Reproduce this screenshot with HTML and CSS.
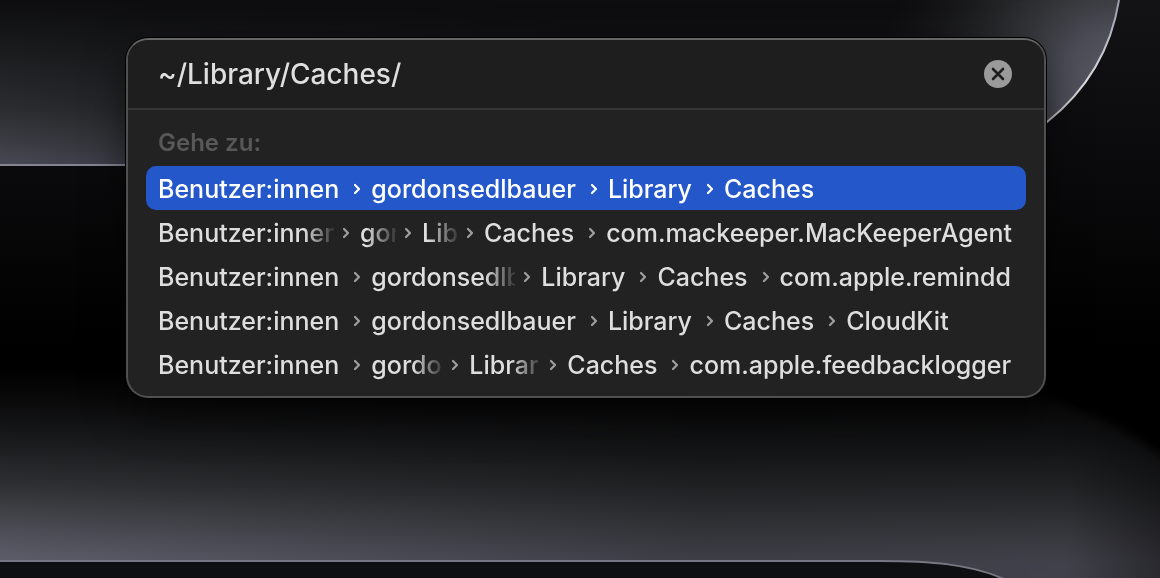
FILE: index.html
```
<!DOCTYPE html>
<html lang="de">
<head>
  <meta charset="UTF-8">
  <meta name="viewport" content="width=device-width, initial-scale=1.0">
  <title>Gehe zu</title>
  <link rel="stylesheet" href="styles.css">
</head>
<body>
  <!-- Desktop wallpaper -->
  <svg class="wallpaper" viewBox="0 0 1160 578" preserveAspectRatio="none" aria-hidden="true">
    <defs>
      <linearGradient id="upper" x1="0" y1="0" x2="0" y2="1">
        <stop offset="0" stop-color="#0d0d0f"/>
        <stop offset="0.3" stop-color="#1a1b1d"/>
        <stop offset="0.65" stop-color="#2b2c2f"/>
        <stop offset="0.9" stop-color="#3f4048"/>
        <stop offset="1" stop-color="#484957"/>
      </linearGradient>
      <linearGradient id="upperShade" x1="0" y1="0" x2="1" y2="0">
        <stop offset="0" stop-color="#0c0c0e" stop-opacity="0"/>
        <stop offset="0.15" stop-color="#0c0c0e" stop-opacity="0.3"/>
        <stop offset="0.5" stop-color="#0c0c0e" stop-opacity="0.7"/>
        <stop offset="1" stop-color="#0c0c0e" stop-opacity="0.7"/>
      </linearGradient>
      <radialGradient id="upperGlow" gradientUnits="userSpaceOnUse" cx="1120" cy="90" r="240">
        <stop offset="0" stop-color="#5c5c68"/>
        <stop offset="0.25" stop-color="#4c4c57"/>
        <stop offset="0.5" stop-color="#37383b" stop-opacity="0.8"/>
        <stop offset="0.75" stop-color="#2a2b2d" stop-opacity="0.4"/>
        <stop offset="1" stop-color="#202123" stop-opacity="0"/>
      </radialGradient>
      <linearGradient id="middle" x1="0" y1="0" x2="0" y2="1">
        <stop offset="0" stop-color="#131316"/>
        <stop offset="0.3" stop-color="#0a0a0c"/>
        <stop offset="0.6" stop-color="#000000"/>
      </linearGradient>
      <linearGradient id="lower" gradientUnits="userSpaceOnUse" x1="0" y1="370" x2="0" y2="561">
        <stop offset="0" stop-color="#000000"/>
        <stop offset="0.15" stop-color="#09090a"/>
        <stop offset="0.4" stop-color="#1c1d1f"/>
        <stop offset="0.6" stop-color="#2f3033"/>
        <stop offset="0.8" stop-color="#484950"/>
        <stop offset="1" stop-color="#5f5f6d"/>
      </linearGradient>
      <linearGradient id="lowerShade" x1="0" y1="0" x2="1" y2="0">
        <stop offset="0" stop-color="#000000" stop-opacity="0"/>
        <stop offset="0.6" stop-color="#000000" stop-opacity="0.35"/>
        <stop offset="0.9" stop-color="#000000" stop-opacity="0.32"/>
        <stop offset="1" stop-color="#000000" stop-opacity="0.65"/>
      </linearGradient>
      <linearGradient id="rim" x1="0" y1="0" x2="0" y2="1">
        <stop offset="0" stop-color="#9a9aad"/>
        <stop offset="0.5" stop-color="#dededf"/>
        <stop offset="1" stop-color="#858592"/>
      </linearGradient>
      <filter id="soft" x="-10%" y="-10%" width="120%" height="120%" color-interpolation-filters="sRGB">
        <feGaussianBlur stdDeviation="5"/>
      </filter>
    </defs>
    <rect width="1160" height="578" fill="url(#middle)"/>
    <path d="M0 0H1119C1111 50 1087 90 1047 122C1005 153 960 165 890 165H0Z" fill="url(#upper)"/>
    <path d="M0 0H1119C1111 50 1087 90 1047 122C1005 153 960 165 890 165H0Z" fill="url(#upperShade)"/>
    <path d="M0 0H1119C1111 50 1087 90 1047 122C1005 153 960 165 890 165H0Z" fill="url(#upperGlow)"/>
    <path d="M1119 0C1111 50 1087 90 1047 122C1005 153 960 165 890 165H0" fill="none" stroke="url(#rim)" stroke-width="2"/>
    <g filter="url(#soft)">
      <path d="M-30 370H930C1040 390 1120 415 1190 480V620H-30Z" fill="url(#lower)"/>
      <path d="M-30 370H930C1040 390 1120 415 1190 480V620H-30Z" fill="url(#lowerShade)"/>
    </g>
    <path d="M0 561H880C930 561 970 564 1004 579H0Z" fill="#0e0f12"/>
    <path d="M0 561H880C930 561 970 564 1004 579" fill="none" stroke="#777783" stroke-width="2"/>
  </svg>

  <!-- Chevron shared by all path rows -->
  <svg class="sprite" aria-hidden="true">
    <symbol id="chevron" viewBox="0 0 26 20">
      <path d="M10 7L14 11L10 15" fill="none" stroke="currentColor" stroke-width="2.2" stroke-linecap="round" stroke-linejoin="round"/>
    </symbol>
  </svg>

  <main class="panel">
    <form class="search">
      <input class="search-input" type="text" value="~/Library/Caches/" aria-label="Pfad" spellcheck="false">
      <button class="clear" type="reset" aria-label="Eingabe löschen">
        <svg viewBox="0 0 28 28" aria-hidden="true">
          <circle cx="14" cy="14" r="14" fill="#9a9a9a"/>
          <path d="M9 9L19 19M19 9L9 19" fill="none" stroke="#1e1e1e" stroke-width="2.6" stroke-linecap="round"/>
        </svg>
      </button>
    </form>

    <section class="results">
      <h2 class="results-title">Gehe zu:</h2>
      <nav class="paths">
        <a class="path selected" href="#">
          <span class="part">Benutzer:innen</span><svg class="chevron"><use href="#chevron"/></svg>
          <span class="part">gordonsedlbauer</span><svg class="chevron"><use href="#chevron"/></svg>
          <span class="part">Library</span><svg class="chevron"><use href="#chevron"/></svg>
          <span class="part">Caches</span>
        </a>
        <a class="path" href="#">
          <span class="part clip clip-xl">Benutzer:innen</span><svg class="chevron"><use href="#chevron"/></svg>
          <span class="part clip clip-sm">gor</span><svg class="chevron"><use href="#chevron"/></svg>
          <span class="part clip clip-sm">Lib</span><svg class="chevron"><use href="#chevron"/></svg>
          <span class="part">Caches</span><svg class="chevron"><use href="#chevron"/></svg>
          <span class="part last">com.mackeeper.MacKeeperAgent</span>
        </a>
        <a class="path" href="#">
          <span class="part">Benutzer:innen</span><svg class="chevron"><use href="#chevron"/></svg>
          <span class="part clip clip-lg">gordonsedlb</span><svg class="chevron"><use href="#chevron"/></svg>
          <span class="part">Library</span><svg class="chevron"><use href="#chevron"/></svg>
          <span class="part">Caches</span><svg class="chevron"><use href="#chevron"/></svg>
          <span class="part last">com.apple.remindd</span>
        </a>
        <a class="path" href="#">
          <span class="part">Benutzer:innen</span><svg class="chevron"><use href="#chevron"/></svg>
          <span class="part">gordonsedlbauer</span><svg class="chevron"><use href="#chevron"/></svg>
          <span class="part">Library</span><svg class="chevron"><use href="#chevron"/></svg>
          <span class="part">Caches</span><svg class="chevron"><use href="#chevron"/></svg>
          <span class="part last">CloudKit</span>
        </a>
        <a class="path" href="#">
          <span class="part">Benutzer:innen</span><svg class="chevron"><use href="#chevron"/></svg>
          <span class="part clip clip-md">gordo</span><svg class="chevron"><use href="#chevron"/></svg>
          <span class="part clip clip-md">Librar</span><svg class="chevron"><use href="#chevron"/></svg>
          <span class="part">Caches</span><svg class="chevron"><use href="#chevron"/></svg>
          <span class="part last">com.apple.feedbacklogger</span>
        </a>
      </nav>
    </section>
  </main>
</body>
</html>
```
FILE: styles.css
```
* {
  margin: 0;
  padding: 0;
  box-sizing: border-box;
}

body {
  font-family: Inter, "Liberation Sans", sans-serif;
  font-weight: 500;
  background-color: #000;
  min-height: 100vh;
  padding: 38px 114px 38px 126px;
  overflow: hidden;
}

.wallpaper {
  position: fixed;
  inset: 0;
  width: 100%;
  height: 100%;
  z-index: -1;
}

.sprite {
  display: none;
}

.panel {
  background-color: #222;
  border: 2px solid #505050;
  border-top-color: #666;
  border-radius: 22px;
  box-shadow: 0 0 0 1px #000, 0 16px 40px rgba(0, 0, 0, 0.5);
  overflow: hidden;
}

.search {
  display: flex;
  align-items: center;
  height: 70px;
  padding: 0 32px 0 30px;
  background-color: #1e1e1e;
  border-bottom: 2px solid #363636;
}

.search-input {
  flex: 1;
  min-width: 0;
  font-family: inherit;
  font-size: 28px;
  font-weight: 500;
  line-height: 40px;
  color: #dfdfdf;
  background: none;
  border: none;
  outline: none;
}

.clear {
  width: 28px;
  height: 28px;
  background: none;
  border: none;
  cursor: pointer;
}

.clear svg {
  display: block;
}

.results {
  padding: 14px 18px 10px;
}

.results-title {
  font-size: 24px;
  font-weight: 600;
  line-height: 38px;
  color: #585858;
  padding: 0 12px;
  margin-bottom: 4px;
}

.path {
  display: flex;
  align-items: center;
  height: 44px;
  padding: 0 12px;
  border-radius: 10px;
  font-size: 25px;
  line-height: 44px;
  color: #dedede;
  text-decoration: none;
  white-space: nowrap;
}

.part {
  flex: none;
  padding-top: 2px;
  padding-right: 6px;
}

.last {
  padding-right: 0;
}

/* Shortened folder names fade out on the right */
.clip {
  padding-right: 0;
  overflow: hidden;
  -webkit-mask-image: linear-gradient(to left, rgba(0, 0, 0, 0.1), #000 30px);
  mask-image: linear-gradient(to left, rgba(0, 0, 0, 0.1), #000 30px);
}

.clip-sm {
  width: 36px;
}

.clip-md {
  width: 72px;
}

.clip-lg {
  width: 144px;
}

.clip-xl {
  width: 176px;
}

.chevron {
  flex: none;
  width: 26px;
  height: 20px;
  color: #a0a0a0;
}

.selected {
  background-color: #2458ca;
  color: #fff;
}

.selected .chevron {
  color: #fff;
}
```
